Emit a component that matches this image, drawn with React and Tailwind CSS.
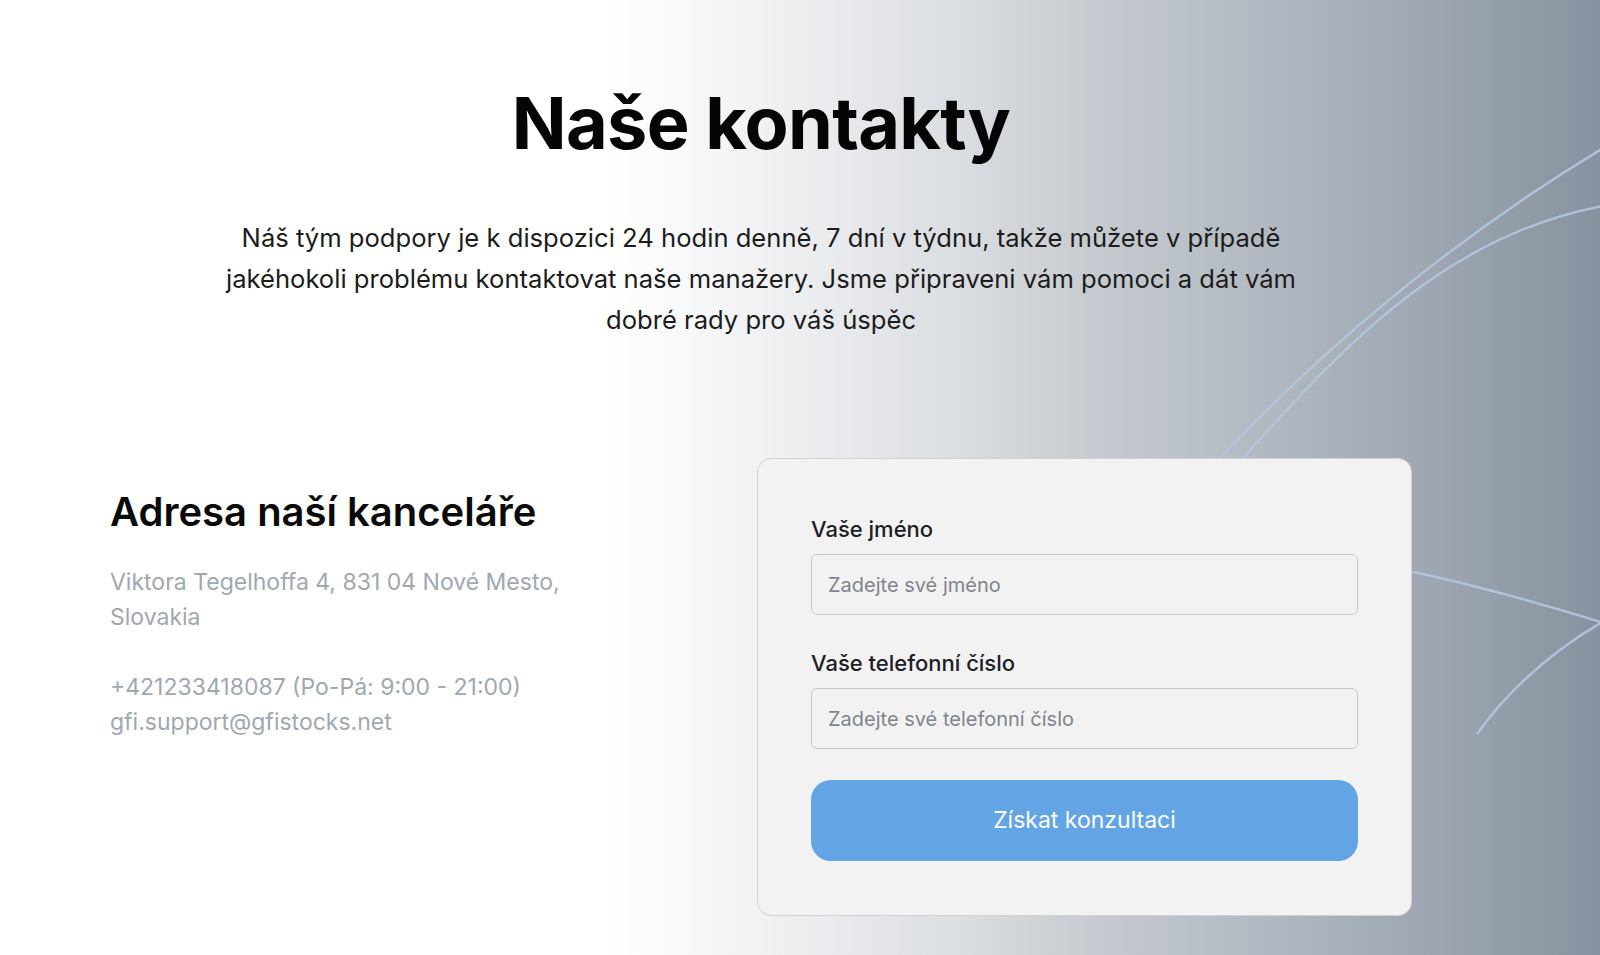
import React, { useState } from "react";

function Field({ label, placeholder, name, value, onChange, className = "" }) {
  return (
    <div className={className}>
      <label
        htmlFor={name}
        className="block text-[22px] leading-[30px] font-medium text-[#1d2025]"
      >
        {label}
      </label>
      <input
        id={name}
        name={name}
        value={value}
        onChange={onChange}
        placeholder={placeholder}
        className="mt-[10px] block h-[61px] w-full rounded-[6px] border border-[#c6cad0] bg-transparent px-4 text-[20px] text-[#1d2025] placeholder-[#80858c] focus:outline-none"
      />
    </div>
  );
}

export default function App() {
  const [form, setForm] = useState({ name: "", phone: "" });

  const handleChange = (e) => {
    const { name, value } = e.target;
    setForm((prev) => ({ ...prev, [name]: value }));
  };

  return (
    <div className="relative min-h-screen overflow-hidden bg-[linear-gradient(90deg,#ffffff_0%,#ffffff_38%,#eceef0_50%,#dadde1_60%,#c3c8ce_70%,#b0b7c0_80%,#9ca5b0_90%,#8792a0_100%)] font-['Inter',sans-serif]">
      {/* decorative lines */}
      <svg
        className="pointer-events-none absolute inset-0 h-full w-full"
        viewBox="0 0 1600 955"
        preserveAspectRatio="none"
        fill="none"
      >
        <g stroke="#b2c5de" strokeOpacity="0.9" strokeWidth="2.5">
          <path d="M1190 490 C1290 380 1430 250 1620 138" />
          <path d="M1215 490 C1330 360 1440 230 1620 203" />
          <path d="M1400 569 Q1500 590 1620 628" />
          <path d="M1477 734 Q1530 660 1620 612" />
        </g>
      </svg>

      <div className="relative ml-[110px] w-[1302px] pt-[87px]">
        <h1 className="text-center text-[72px] leading-none font-bold tracking-[-0.01em] text-[#050505]">
          Naše kontakty
        </h1>
        <p className="mx-auto mt-[58px] max-w-[1080px] text-center text-[25.6px] leading-[41px] text-[#1c1c1c]">
          Náš tým podpory je k dispozici 24 hodin denně, 7 dní v týdnu, takže
          můžete v případě jakéhokoli problému kontaktovat naše manažery. Jsme
          připraveni vám pomoci a dát vám dobré rady pro váš úspěc
        </p>

        <div className="mt-[118px] flex items-start justify-between">
          <div className="w-[500px] pt-[30px]">
            <h2 className="text-[40px] leading-[48px] font-semibold text-[#0a0a0a]">
              Adresa naší kanceláře
            </h2>
            <p className="mt-[29px] text-[23px] leading-[35px] text-[#a1a7b1]">
              Viktora Tegelhoffa 4, 831 04 Nové Mesto, Slovakia
            </p>
            <p className="mt-[35px] text-[23px] leading-[35px] text-[#a1a7b1]">
              +421233418087 (Po-Pá: 9:00 - 21:00)
              <br />
              gfi.support@gfistocks.net
            </p>
          </div>

          <form
            onSubmit={(e) => e.preventDefault()}
            className="w-[655px] rounded-[14px] border border-[#cfd3d8] bg-[#f2f2f2] px-[53px] pt-[55px] pb-[54px]"
          >
            <Field
              label="Vaše jméno"
              name="name"
              placeholder="Zadejte své jméno"
              value={form.name}
              onChange={handleChange}
            />
            <Field
              className="mt-[33px]"
              label="Vaše telefonní číslo"
              name="phone"
              placeholder="Zadejte své telefonní číslo"
              value={form.phone}
              onChange={handleChange}
            />
            <button
              type="submit"
              className="mt-[31px] flex h-[81px] w-full items-center justify-center rounded-[20px] bg-[#62a4e4] text-[23px] text-white"
            >
              Získat konzultaci
            </button>
          </form>
        </div>
      </div>
    </div>
  );
}
